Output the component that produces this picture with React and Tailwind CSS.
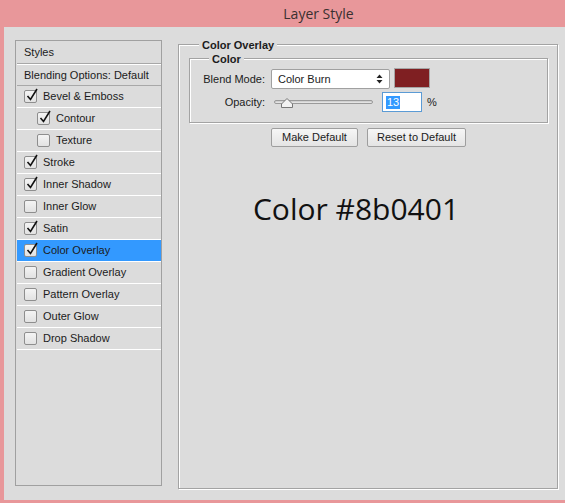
import React from 'react';

const rows = [
  { label: 'Bevel & Emboss', checked: true },
  { label: 'Contour', checked: true, sub: true },
  { label: 'Texture', checked: false, sub: true },
  { label: 'Stroke', checked: true },
  { label: 'Inner Shadow', checked: true },
  { label: 'Inner Glow', checked: false },
  { label: 'Satin', checked: true },
  { label: 'Color Overlay', checked: true, active: true },
  { label: 'Gradient Overlay', checked: false },
  { label: 'Pattern Overlay', checked: false },
  { label: 'Outer Glow', checked: false },
  { label: 'Drop Shadow', checked: false },
];

function Checkbox({ checked }) {
  return (
    <div className="relative w-[13px] h-[13px] shrink-0 rounded-[2px] border border-[#8e8e8e] bg-gradient-to-b from-[#f4f4f4] to-[#e2e2e2]">
      {checked && (
        <svg className="absolute left-[1px] top-[-3px] overflow-visible" width="13" height="14" viewBox="0 0 13 14">
          <path d="M1.5 8 L4.5 11.5 L11 1" fill="none" stroke="#111" strokeWidth="1.6" />
        </svg>
      )}
    </div>
  );
}

function Row({ label, checked, sub, active }) {
  return (
    <div
      className={`h-[22px] flex items-center gap-[6px] border-b border-white ${sub ? 'pl-[20px]' : 'pl-[7px]'} ${active ? 'bg-[#3399ff]' : ''}`}
    >
      <Checkbox checked={checked} />
      <span>{label}</span>
    </div>
  );
}

export default function App() {
  return (
    <div
      className="w-[565px] h-[503px] bg-[#e8979a] overflow-hidden text-[11px] text-[#1b1b1b]"
      style={{ fontFamily: '"Liberation Sans", Arial, sans-serif' }}
    >
      <div
        className="h-[27px] flex items-center justify-center pl-[72px] text-[14px] text-[#3a3030]"
        style={{ fontFamily: '"Open Sans", "Noto Sans", sans-serif' }}
      >
        Layer Style
      </div>
      <div className="ml-[4px] h-[473px] bg-[#dcdcdc] flex pt-[13px] pl-[11px]">
        {/* styles list */}
        <div className="w-[147px] h-[446px] border border-[#a0a0a0] shrink-0 pl-[1px]">
          <div className="h-[23px] flex items-center pl-[7px] border-b border-[#a8a8a8] shadow-[0_1px_0_#fff]">Styles</div>
          <div className="h-[22px] flex items-center pl-[7px] pt-[1px] border-b border-[#a8a8a8]">Blending Options: Default</div>
          {rows.map((r) => (
            <Row key={r.label} {...r} />
          ))}
        </div>

        {/* options */}
        <div className="relative ml-[16px] mt-[4px] w-[380px] h-[445px] border border-[#a3a3a3] shadow-[inset_1px_1px_0_#fff,1px_1px_0_#fff]">
          <div className="absolute left-[20px] top-[-8px] px-[3px] bg-[#dcdcdc] font-bold text-[11px]">Color Overlay</div>

          <div className="relative ml-[10px] mt-[13px] w-[359px] h-[65px] border border-[#a3a3a3] shadow-[inset_1px_1px_0_#fff,1px_1px_0_#fff]">
            <div className="absolute left-[19px] top-[-8px] px-[3px] bg-[#dcdcdc] font-bold text-[11px]">Color</div>

            <div className="flex items-center mt-[10px]">
              <div className="w-[75px] text-right">Blend Mode:</div>
              <div className="ml-[6px] w-[119px] h-[20px] rounded-[2px] border border-[#a0a0a0] bg-white flex items-center justify-between px-[6px]">
                <span>Color Burn</span>
                <svg width="7" height="10" viewBox="0 0 7 10">
                  <path d="M3.5 0.5 L6.5 4 H0.5 Z M3.5 9.5 L6.5 6 H0.5 Z" fill="#222" />
                </svg>
              </div>
              <div className="ml-[4px] w-[36px] h-[20px] mt-[-2px] border border-[#a6a6a6] bg-[#7f1f22]" />
            </div>

            <div className="flex items-center mt-[3px]">
              <div className="w-[75px] text-right">Opacity:</div>
              <div className="relative ml-[9px] w-[99px] h-[20px] flex items-center">
                <div className="w-full h-[4px] rounded-full border border-[#9a9a9a] bg-gradient-to-b from-[#c8c8c8] to-[#ececec]" />
                <svg className="absolute left-[7px] top-[6px]" width="12" height="10" viewBox="0 0 12 10">
                  <path d="M6 0.5 L11.5 6 V9.5 H0.5 V6 Z" fill="#f2f2f2" stroke="#777" />
                </svg>
              </div>
              <div className="ml-[9px] w-[40px] h-[20px] border border-[#5b9bd5] bg-white flex items-center pl-[3px]">
                <span className="bg-[#3399ff] text-white leading-[13px] px-[1px]">13</span>
              </div>
              <span className="ml-[5px]">%</span>
            </div>
          </div>

          <div className="flex justify-center gap-[9px] mt-[5px] pl-[1px]">
            <button className="w-[87px] h-[19px] rounded-[2px] border border-[#9e9e9e] bg-gradient-to-b from-[#f6f6f6] to-[#e4e4e4] text-[11px]">
              Make Default
            </button>
            <button className="w-[99px] h-[19px] rounded-[2px] border border-[#9e9e9e] bg-gradient-to-b from-[#f6f6f6] to-[#e4e4e4] text-[11px]">
              Reset to Default
            </button>
          </div>

          <div
            className="mt-[39px] text-center pr-[24px] text-[30px] text-[#111]"
            style={{ fontFamily: '"Open Sans", "Noto Sans", sans-serif' }}
          >
            Color #8b0401
          </div>
        </div>
      </div>
    </div>
  );
}
